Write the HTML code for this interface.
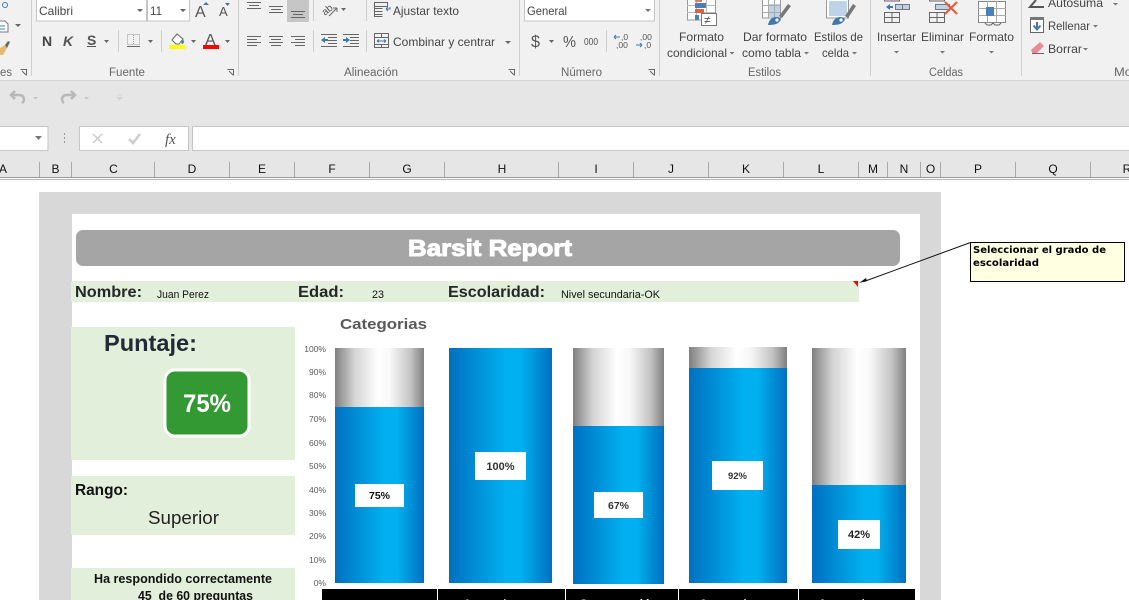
<!DOCTYPE html>
<html lang="es"><head><meta charset="utf-8"><title>Barsit Report</title>
<style>
html,body{margin:0;padding:0;width:1129px;height:600px;overflow:hidden;background:#fff}
svg{display:block}
text{font-family:"Liberation Sans",sans-serif;white-space:pre}
.r{font-size:12px;fill:#444}
.g{font-size:11.5px;fill:#666}
.h{font-size:12px;fill:#111;text-anchor:middle}
.a{font-size:8.5px;fill:#595959;text-anchor:end}
.b{font-size:16px;font-weight:bold;fill:#262626}
.s{font-size:11px;fill:#111}
.l{font-size:10.5px;font-weight:bold;fill:#333;text-anchor:middle}
.ic{fill:none;stroke:#666;stroke-width:1}
.t{fill:#666}
</style></head><body>
<svg width="1129" height="600" viewBox="0 0 1129 600" xmlns="http://www.w3.org/2000/svg">
<defs>
<linearGradient id="bl"><stop offset="0" stop-color="#0070c0"/><stop offset=".55" stop-color="#00b0f0"/><stop offset=".7" stop-color="#00b0f0"/><stop offset="1" stop-color="#0070c0"/></linearGradient>
<linearGradient id="gr"><stop offset="0" stop-color="#7f7f7f"/><stop offset=".22" stop-color="#d4d4d4"/><stop offset=".48" stop-color="#fff"/><stop offset=".62" stop-color="#f8f8f8"/><stop offset=".85" stop-color="#c4c4c4"/><stop offset="1" stop-color="#7f7f7f"/></linearGradient>
</defs>

<!-- ribbon -->
<rect width="1129" height="80" fill="#f1f1f1"/>
<rect y="80" width="1129" height="1" fill="#d4d4d4"/>
<rect y="81" width="1129" height="96" fill="#e6e6e6"/>
<g fill="#d0d0d0"><rect x="31" width="1" height="76"/><rect x="238" width="1" height="76"/><rect x="519" width="1" height="76"/><rect x="659" width="1" height="76"/><rect x="870" width="1" height="76"/><rect x="1021" width="1" height="76"/></g>

<!-- clipboard leftovers -->
<circle cx="5" cy="5" r="2.5" fill="none" stroke="#3f78b0"/>
<path d="M-1 21h6l3 3v8h-9z" fill="#fff" stroke="#777"/><path d="M0 26h5M0 29h5" stroke="#3f78b0"/>
<path d="M15 24h6l-3 3z" class="t"/>
<path d="M0 48l5-3 2 3-4 7h-3z" fill="#e9b872"/><path d="M5 45l3-4 2 1-3 6z" fill="#666"/>
<text x="0" y="76" class="g" textLength="12" lengthAdjust="spacingAndGlyphs">es</text>

<!-- font group -->
<rect x="36.500" y="-2" width="110" height="23" fill="#fff" stroke="#c6c6c6"/>
<rect x="147.500" y="-2" width="42" height="23" fill="#fff" stroke="#c6c6c6"/>
<text x="39" y="15" class="r" textLength="34" lengthAdjust="spacingAndGlyphs">Calibri</text>
<text x="150" y="15" class="r" textLength="12" lengthAdjust="spacingAndGlyphs">11</text>
<path d="M137 9h6l-3 3zM180 9h6l-3 3z" class="t"/>
<text x="195" y="17" style="font-size:16px;fill:#555">A</text><path d="M203 5l3-3 3 3z" fill="#3f78b0"/>
<text x="219" y="16" style="font-size:13px;fill:#555">A</text><path d="M225 3h5l-2.500 3z" fill="#3f78b0"/>
<text x="42" y="46" style="font-size:14px;font-weight:bold;fill:#444">N</text>
<text x="63" y="46" style="font-size:14px;font-weight:bold;font-style:italic;fill:#555">K</text>
<text x="87" y="45" style="font-size:14px;font-weight:bold;fill:#555">S</text><rect x="87" y="46" width="9" height="1" fill="#555"/>
<path d="M104 40h5l-2.500 3zM148 40h5l-2.500 3zM191 40h5l-2.500 3zM225 40h5l-2.500 3z" class="t"/>
<rect x="127.500" y="34.500" width="12" height="10" fill="none" stroke="#999" stroke-dasharray="1 1"/><path d="M133.500 35v10" stroke="#999" stroke-dasharray="1 1"/><rect x="127" y="46" width="13" height="1" fill="#666"/>
<rect x="118" y="30" width="1" height="22" fill="#d0d0d0"/><rect x="161" y="30" width="1" height="22" fill="#d0d0d0"/>
<path d="M172 40l5-6 6 5-4 5h-3z" fill="#fff" stroke="#666"/><path d="M183 39l1 3-1 2-2-1z" fill="#3f78b0"/>
<rect x="169" y="45" width="16" height="4" fill="#ff0"/>
<text x="205" y="45" style="font-size:16px;fill:#555">A</text><rect x="203" y="45" width="16" height="4" fill="#f00"/>
<text x="109" y="76" class="g" textLength="36" lengthAdjust="spacingAndGlyphs">Fuente</text>
<path d="M20.500 69.500h6v6M26 75l-4-4" class="ic"/>
<path d="M227.500 69.500h6v6M233 75l-4-4" class="ic"/>

<!-- alignment -->
<g stroke="#666" fill="none">
<path d="M247 2.500h14M249 5.500h10M247 8.500h14"/>
<path d="M269 6.500h14M271 9.500h10M269 12.500h14"/>
<path d="M247 36.500h14M247 39.500h10M247 42.500h14M247 45.500h10"/>
<path d="M269 36.500h14M271 39.500h10M269 42.500h14M271 45.500h10"/>
<path d="M291 36.500h14M295 39.500h10M291 42.500h14M295 45.500h10"/>
</g>
<rect x="287" y="0" width="22" height="22" fill="#c6c6c6"/>
<path d="M291 11.500h14M293 14.500h10M291 17.500h14" stroke="#666" fill="none"/>
<rect x="313" y="30" width="1" height="22" fill="#d0d0d0"/><rect x="313" y="0" width="1" height="21" fill="#d0d0d0"/>
<g stroke="#666" fill="none">
<path d="M321 34.500h16M328 37.500h9M328 40.500h9M328 43.500h9M321 46.500h16"/>
<path d="M343 34.500h16M350 37.500h9M350 40.500h9M350 43.500h9M343 46.500h16"/>
<path d="M329 16l8-8M337 8h-4M337 8v4"/>
</g>
<text x="321" y="13" transform="rotate(-40 327 9)" style="font-size:10px;fill:#555">ab</text>
<path d="M321 40l4-3v2h3v2h-3v2zM350 40l-4-3v2h-3v2h3v2z" fill="#3f78b0"/>
<path d="M341 8h5l-2.500 3z" class="t"/>
<rect x="366" y="0" width="1" height="21" fill="#d0d0d0"/><rect x="366" y="30" width="1" height="22" fill="#d0d0d0"/>

<path d="M374.500 2.500h13v4h-13zM374.500 8.500h8M374.500 11.500h8M374.500 14.500h8M374.500 2.500v14h8" class="ic"/>
<path d="M390 7v2h-4M386 9l2-2M386 9l2 2" stroke="#3f78b0" fill="none"/>
<text x="393" y="15" class="r" textLength="66" lengthAdjust="spacingAndGlyphs">Ajustar texto</text>
<rect x="374.500" y="33.500" width="14" height="14" fill="none" stroke="#666"/><path d="M374 37.500h15M374 44.500h15M381.500 33v4M381.500 45v3" stroke="#666"/><path d="M377 41h9M377 41l2-1.500M377 41l2 1.500M386 41l-2-1.500M386 41l-2 1.500" stroke="#3f78b0" fill="none"/>
<text x="393" y="46" class="r" textLength="102" lengthAdjust="spacingAndGlyphs">Combinar y centrar</text>
<path d="M505 41h6l-3 3z" class="t"/>
<text x="344" y="76" class="g" textLength="54" lengthAdjust="spacingAndGlyphs">Alineación</text>
<path d="M508.500 69.500h6v6M514 75l-4-4" class="ic"/>

<!-- number -->
<rect x="524.500" y="-2" width="130" height="23" fill="#fff" stroke="#c6c6c6"/>
<text x="527" y="15" class="r" textLength="40" lengthAdjust="spacingAndGlyphs">General</text>
<path d="M645 9h6l-3 3z" fill="#777"/>
<text x="531" y="47" style="font-size:17px;fill:#555" textLength="9" lengthAdjust="spacingAndGlyphs">$</text>
<path d="M549 40h5l-2.500 3z" class="t"/>
<text x="563" y="47" style="font-size:16px;fill:#555" textLength="13" lengthAdjust="spacingAndGlyphs">%</text>
<text x="584" y="45" style="font-size:10px;fill:#555" textLength="14" lengthAdjust="spacingAndGlyphs">000</text>
<rect x="606" y="30" width="1" height="22" fill="#d0d0d0"/>
<text x="621" y="40" style="font-size:8.500px;fill:#555">,0</text><text x="616" y="48" style="font-size:8.500px;fill:#555">,00</text>
<text x="640" y="40" style="font-size:8.500px;fill:#555">,00</text><text x="644" y="48" style="font-size:8.500px;fill:#555">,0</text>
<path d="M620 37h-6M614 37l2-2M614 37l2 2M636 45h6M642 45l-2-2M642 45l-2 2" stroke="#3f78b0" fill="none"/>
<text x="561" y="76" class="g" textLength="41" lengthAdjust="spacingAndGlyphs">Número</text>
<path d="M648.500 69.500h6v6M654 75l-4-4" class="ic"/>

<!-- styles -->
<rect x="687.500" y="-2" width="28" height="22" fill="#fff" stroke="#999"/>
<path d="M687 5.500h28M687 12.500h28M696.500 -2v22M706.500 -2v22" stroke="#bbb" fill="none"/>
<rect x="695" y="0" width="7" height="2" fill="#e07a5f"/><rect x="695" y="3" width="11" height="5" fill="#4a80b8"/><rect x="695" y="9" width="9" height="4" fill="#e0603a"/><rect x="695" y="15" width="4" height="5" fill="#4a80b8"/>
<rect x="701.500" y="13.500" width="15" height="12" fill="#fff" stroke="#777"/>
<text x="704" y="24" style="font-size:12px;fill:#555">≠</text>

<rect x="762.500" y="-2" width="18" height="20" fill="#fff" stroke="#999"/>
<rect x="768" y="4" width="12" height="14" fill="#bfd3e8"/>
<path d="M762 5.500h18M762 12.500h18M768.500 -2v20M774.500 -2v20" stroke="#aaa" fill="none"/>
<path d="M779 16l9-12 3 2-9 12z" fill="#777"/><path d="M768 25c1-5 4-8 8-8s6 2 4 4-3 4-12 4z" fill="#3f78b0"/><circle cx="777" cy="20" r="1.600" fill="#fff"/>

<rect x="826.500" y="-2" width="22" height="20" fill="#fff" stroke="#999"/>
<rect x="829" y="1" width="18" height="15" fill="#bfd3e8"/>
<path d="M845 16l8-12 3 2-8 12z" fill="#777"/><path d="M832 25c1-5 4-8 8-8s6 2 4 4-3 4-12 4z" fill="#3f78b0"/><circle cx="841" cy="20" r="1.600" fill="#fff"/>

<text x="679" y="41" class="r" textLength="45" lengthAdjust="spacingAndGlyphs">Formato</text>
<text x="667" y="57" class="r" textLength="60" lengthAdjust="spacingAndGlyphs">condicional</text>
<text x="743" y="41" class="r" textLength="64" lengthAdjust="spacingAndGlyphs">Dar formato</text>
<text x="742" y="57" class="r" textLength="59" lengthAdjust="spacingAndGlyphs">como tabla</text>
<text x="814" y="41" class="r" textLength="49" lengthAdjust="spacingAndGlyphs">Estilos de</text>
<text x="822" y="57" class="r" textLength="27" lengthAdjust="spacingAndGlyphs">celda</text>
<text x="877" y="41" class="r" textLength="39" lengthAdjust="spacingAndGlyphs">Insertar</text>
<text x="921" y="41" class="r" textLength="43" lengthAdjust="spacingAndGlyphs">Eliminar</text>
<text x="969" y="41" class="r" textLength="45" lengthAdjust="spacingAndGlyphs">Formato</text>
<text x="1048" y="7" class="r" textLength="55" lengthAdjust="spacingAndGlyphs">Autosuma</text>
<text x="1048" y="30" class="r" textLength="42" lengthAdjust="spacingAndGlyphs">Rellenar</text>
<text x="1048" y="53" class="r" textLength="34" lengthAdjust="spacingAndGlyphs">Borrar</text>
<path d="M729.500 52h5l-2.500 2.500zM804 52h5l-2.500 2.500zM852 52h5l-2.500 2.500zM894 51h5l-2.500 2.500zM940 51h5l-2.500 2.500zM989 51h5l-2.500 2.500zM1113 3h5l-2.500 2.500zM1093 25h5l-2.500 2.500zM1083 48h5l-2.500 2.500z" fill="#777"/>
<text x="748" y="76" class="g" textLength="33" lengthAdjust="spacingAndGlyphs">Estilos</text>
<text x="929" y="76" class="g" textLength="34" lengthAdjust="spacingAndGlyphs">Celdas</text>
<text x="1114" y="76" class="g" textLength="18" lengthAdjust="spacingAndGlyphs">Mo</text>

<!-- cells -->
<path d="M884.500 12.500h15v10h-15zM884.500 17.500h15M892 12.500v10M884.500 -1h15v2h-15z" class="ic"/>
<rect x="895.500" y="4.500" width="14" height="5" fill="#bfd3e8" stroke="#777"/><path d="M902.500 4v6" stroke="#777"/>
<path d="M886 7l4-3v2h3v2h-3v2z" fill="#3f78b0"/>
<path d="M929.500 12.500h15v10h-15zM929.500 17.500h15M937 12.500v10M929.500 -1h15v2h-15z" class="ic"/>
<rect x="935.500" y="4.500" width="14" height="5" fill="#bfd3e8" stroke="#777"/>
<path d="M945 2l12 12M957 2l-12 12" stroke="#e0603a" stroke-width="2.200" fill="none"/>
<rect x="978.500" y="1.500" width="27" height="21" fill="#fff" stroke="#888"/>
<path d="M978 8.500h28M978 15.500h28M987.500 1v21M996.500 1v21" stroke="#aaa" fill="none"/>
<rect x="986" y="7" width="8" height="9" fill="#4a80b8"/>
<path d="M985 23l2 2h4l2-2 2 2h4l2-2" class="ic"/>

<!-- editing -->
<path d="M1036 0l-6 7h14" stroke="#555" stroke-width="2" fill="none"/>
<rect x="1030.500" y="17.500" width="13" height="15" fill="#fff" stroke="#666"/><rect x="1030" y="17" width="14" height="3" fill="#777"/>
<path d="M1037 22v6M1033.500 25.500l3.500 4 3.500-4" stroke="#3f78b0" stroke-width="2" fill="none"/>
<path d="M1031 50l9-8 4 4-8 8h-3z" fill="#e98a98"/><rect x="1032" y="53" width="12" height="1" fill="#666"/>

<!-- quick access -->
<path d="M22 103c3-2 3-8-3-8h-8M15 91l-4 4 4 4" stroke="#b8b8b8" stroke-width="2.500" fill="none"/>
<path d="M33 97h5l-2.500 2.500z" fill="#c4c4c4"/>
<path d="M64 103c-3-2-3-8 3-8h8M71 91l4 4-4 4" stroke="#b8b8b8" stroke-width="2.500" fill="none"/>
<path d="M84 97h5l-2.500 2.500z" fill="#c4c4c4"/>
<path d="M117 95h5M117 97.500h5l-2.500 2.500z" stroke="#d4d4d4" fill="#d4d4d4"/>

<!-- formula bar -->
<rect x="-2" y="126.500" width="50" height="24" fill="#fff" stroke="#c6c6c6"/>
<path d="M35 136h7l-3.500 4z" fill="#777"/>
<path d="M64 133h1v2h-1zM64 137h1v2h-1zM64 141h1v2h-1z" fill="#999"/>
<rect x="79.500" y="126.500" width="109" height="24" fill="#fff" stroke="#c6c6c6"/>
<path d="M93 134l9 9M102 134l-9 9" stroke="#ccc" stroke-width="1.500" fill="none"/>
<path d="M129 139l4 4 7-9" stroke="#ccc" stroke-width="2.500" fill="none"/>
<text x="165" y="144" style="font-family:'Liberation Serif',serif;font-style:italic;font-size:15px;fill:#555">fx</text>
<rect x="192.500" y="126.500" width="940" height="24" fill="#fff" stroke="#c6c6c6"/>

<!-- column headers -->
<g fill="#a8a8a8">
<rect x="39" y="162" width="1" height="15"/><rect x="71" y="162" width="1" height="15"/><rect x="154" y="162" width="1" height="15"/><rect x="229" y="162" width="1" height="15"/><rect x="294" y="162" width="1" height="15"/><rect x="369" y="162" width="1" height="15"/><rect x="444" y="162" width="1" height="15"/><rect x="558" y="162" width="1" height="15"/><rect x="633" y="162" width="1" height="15"/><rect x="708" y="162" width="1" height="15"/><rect x="783" y="162" width="1" height="15"/><rect x="858" y="162" width="1" height="15"/><rect x="887" y="162" width="1" height="15"/><rect x="920" y="162" width="1" height="15"/><rect x="940" y="162" width="1" height="15"/><rect x="1015" y="162" width="1" height="15"/><rect x="1090" y="162" width="1" height="15"/>
</g>
<text x="3" y="173" class="h">A</text><text x="55.500" y="173" class="h">B</text><text x="113.500" y="173" class="h">C</text><text x="192" y="173" class="h">D</text><text x="262" y="173" class="h">E</text><text x="332" y="173" class="h">F</text><text x="407" y="173" class="h">G</text><text x="502" y="173" class="h">H</text><text x="596" y="173" class="h">I</text><text x="671" y="173" class="h">J</text><text x="746" y="173" class="h">K</text><text x="821" y="173" class="h">L</text><text x="873" y="173" class="h">M</text><text x="904" y="173" class="h">N</text><text x="930.500" y="173" class="h">O</text><text x="978" y="173" class="h">P</text><text x="1053" y="173" class="h">Q</text><text x="1127" y="173" class="h">R</text>
<rect y="177" width="1129" height="1" fill="#9a9a9a"/>
<rect y="178" width="1129" height="1" fill="#fff"/>
<rect y="179" width="1129" height="1" fill="#b8b8b8"/>

<!-- report -->
<rect x="39" y="192" width="902" height="408" fill="#d8d8d8"/>
<rect x="72" y="214" width="848" height="386" fill="#fff"/>
<rect x="76" y="230" width="824" height="36" rx="7" fill="#a5a5a5"/>
<text x="408" y="256" style="font-size:23px;font-weight:bold;fill:#fff;stroke:#fff;stroke-width:1" textLength="164" lengthAdjust="spacingAndGlyphs">Barsit Report</text>

<rect x="71" y="281" width="788" height="21" fill="#e2efda"/>
<text x="75" y="297" class="b" textLength="67" lengthAdjust="spacingAndGlyphs">Nombre:</text>
<text x="157" y="298" class="s" textLength="52" lengthAdjust="spacingAndGlyphs">Juan Perez</text>
<text x="298" y="297" class="b" textLength="46" lengthAdjust="spacingAndGlyphs">Edad:</text>
<text x="372" y="298" class="s" textLength="12" lengthAdjust="spacingAndGlyphs">23</text>
<text x="448" y="297" class="b" textLength="97" lengthAdjust="spacingAndGlyphs">Escolaridad:</text>
<text x="561" y="298" class="s" textLength="99" lengthAdjust="spacingAndGlyphs">Nivel secundaria-OK</text>
<path d="M853 281h5v6z" fill="#f00"/>

<rect x="71" y="327" width="224" height="133" fill="#e2efda"/>
<text x="104" y="351" style="font-size:23px;font-weight:bold;fill:#222a35" textLength="93" lengthAdjust="spacingAndGlyphs">Puntaje:</text>
<rect x="165" y="370" width="84" height="66" rx="10" fill="#339933" stroke="#fff" stroke-width="3"/>
<text x="183" y="412" style="font-size:25px;font-weight:bold;fill:#fff" textLength="48" lengthAdjust="spacingAndGlyphs">75%</text>

<rect x="71" y="476" width="224" height="59" fill="#e2efda"/>
<text x="75" y="495" style="font-size:16px;font-weight:bold;fill:#111" textLength="53" lengthAdjust="spacingAndGlyphs">Rango:</text>
<text x="148" y="524" style="font-size:18.500px;fill:#222" textLength="71" lengthAdjust="spacingAndGlyphs">Superior</text>

<rect x="71" y="568" width="224" height="32" fill="#e2efda"/>
<text x="94" y="583" style="font-size:12.500px;font-weight:bold;fill:#111" textLength="178" lengthAdjust="spacingAndGlyphs">Ha respondido correctamente</text>
<text x="138" y="600" style="font-size:12.500px;font-weight:bold;fill:#111" textLength="115" lengthAdjust="spacingAndGlyphs">45  de 60 preguntas</text>

<text x="340" y="329" style="font-size:15px;font-weight:bold;fill:#595959" textLength="87" lengthAdjust="spacingAndGlyphs">Categorias</text>

<text x="326" y="352" class="a">100%</text><text x="326" y="375" class="a">90%</text><text x="326" y="398" class="a">80%</text><text x="326" y="422" class="a">70%</text><text x="326" y="446" class="a">60%</text><text x="326" y="469" class="a">50%</text><text x="326" y="493" class="a">40%</text><text x="326" y="516" class="a">30%</text><text x="326" y="539" class="a">20%</text><text x="326" y="563" class="a">10%</text><text x="326" y="586" class="a">0%</text>

<rect x="335" y="348" width="89" height="59" fill="url(#gr)"/><rect x="335" y="407" width="89" height="176" fill="url(#bl)"/>
<rect x="449" y="348" width="103" height="235" fill="url(#bl)"/>
<rect x="573" y="348" width="91" height="78" fill="url(#gr)"/><rect x="573" y="426" width="91" height="158" fill="url(#bl)"/>
<rect x="689" y="347" width="98" height="21" fill="url(#gr)"/><rect x="689" y="368" width="98" height="215" fill="url(#bl)"/>
<rect x="812" y="348" width="94" height="137" fill="url(#gr)"/><rect x="812" y="485" width="94" height="98" fill="url(#bl)"/>

<rect x="355" y="484" width="49" height="23" fill="#fff"/><text x="379.500" y="499" class="l" style="fill:#111">75%</text>
<rect x="475" y="452" width="51" height="28" fill="#fff"/><text x="500.500" y="470" class="l" style="font-size:11px">100%</text>
<rect x="594" y="492" width="49" height="26" fill="#fff"/><text x="618.500" y="509" class="l">67%</text>
<rect x="712" y="461" width="51" height="29" fill="#fff"/><text x="737.500" y="479" class="l" style="font-size:9.500px">92%</text>
<rect x="838" y="520" width="42" height="29" fill="#fff"/><text x="859" y="538" class="l" style="font-size:11px;fill:#222">42%</text>

<rect x="322" y="589" width="593" height="11" fill="#000"/>
<g fill="#fff"><rect x="437" y="589" width="1" height="11"/><rect x="565" y="589" width="1" height="11"/><rect x="678" y="589" width="1" height="11"/><rect x="798" y="589" width="1" height="11"/></g>
<text x="464" y="608" style="font-size:12px;font-weight:bold;fill:#fff" textLength="50" lengthAdjust="spacingAndGlyphs">Comprender</text>
<text x="579" y="608" style="font-size:12px;font-weight:bold;fill:#fff" textLength="79" lengthAdjust="spacingAndGlyphs">Comprensión</text>
<text x="700" y="608" style="font-size:12px;font-weight:bold;fill:#fff" textLength="55" lengthAdjust="spacingAndGlyphs">Comprender</text>
<text x="819" y="608" style="font-size:12px;font-weight:bold;fill:#fff" textLength="54" lengthAdjust="spacingAndGlyphs">Comprender</text>

<!-- comment -->
<path d="M970.500 242.500L864 281.500" stroke="#111" fill="none"/>
<path d="M859 283l7-5 1 3z" fill="#111"/>
<rect x="970.500" y="242.500" width="154" height="39" fill="#ffffe1" stroke="#000"/>
<text x="973" y="253" style="font-family:'DejaVu Sans',sans-serif;font-size:10px;font-weight:bold;fill:#000" textLength="133" lengthAdjust="spacingAndGlyphs">Seleccionar el grado de</text>
<text x="973" y="266" style="font-family:'DejaVu Sans',sans-serif;font-size:10px;font-weight:bold;fill:#000" textLength="66" lengthAdjust="spacingAndGlyphs">escolaridad</text>
</svg>
</body></html>
